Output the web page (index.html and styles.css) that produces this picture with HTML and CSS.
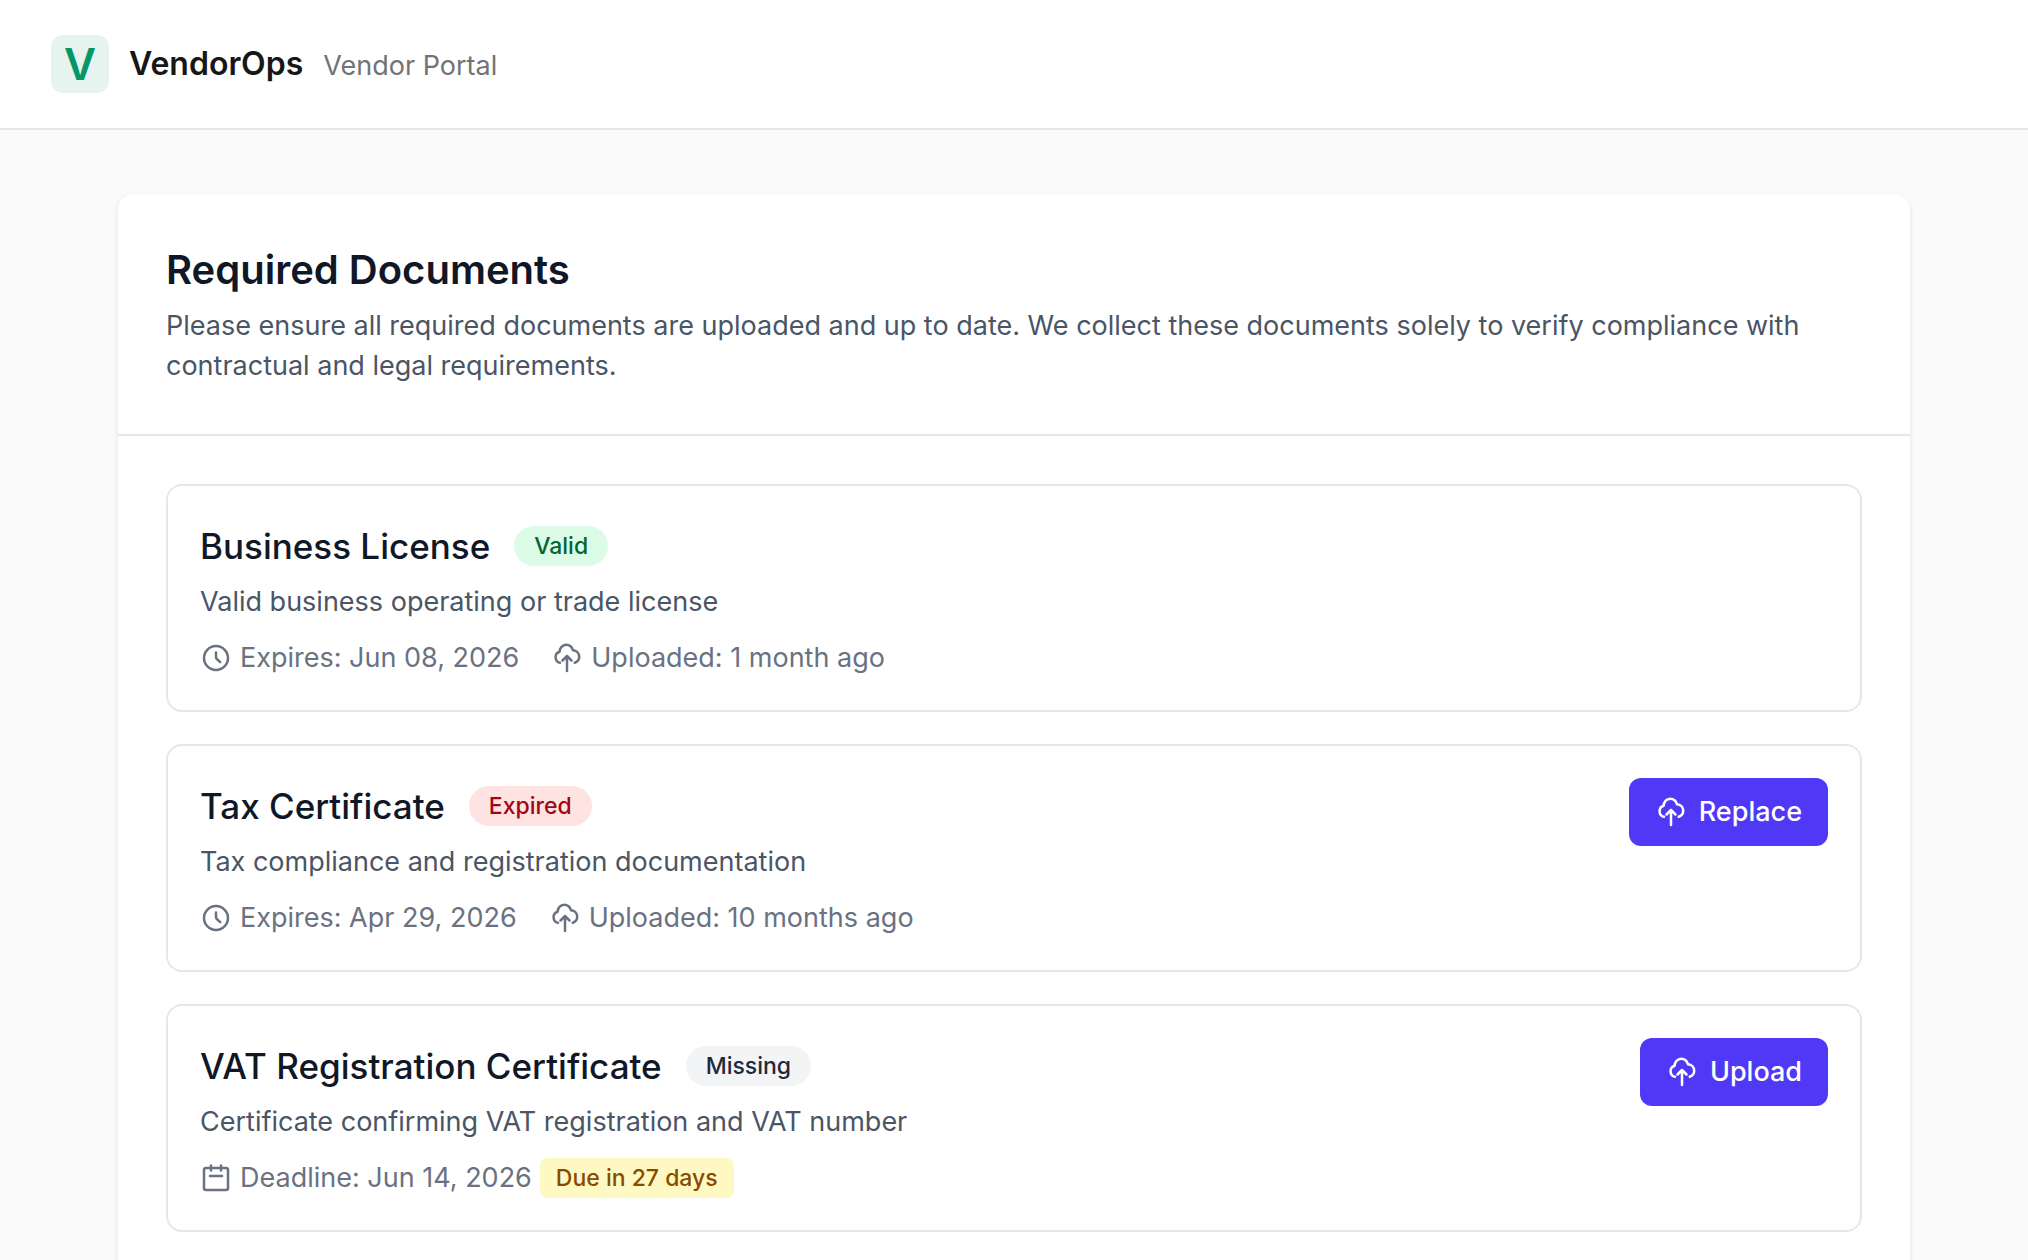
FILE: index.html
```html
<!DOCTYPE html>
<html lang="en">
<head>
    <meta charset="UTF-8">
    <meta name="viewport" content="width=device-width, initial-scale=1.0">
    <title>VendorOps - Vendor Portal</title>
    <link rel="stylesheet" href="styles.css">
</head>
<body>

    <!-- shared icons -->
    <svg class="sprite" aria-hidden="true">
        <symbol id="clock" viewBox="0 0 32 32">
            <circle cx="16" cy="16" r="12"/>
            <path d="M16 10.5v4.500q0 1.200.8 2l3.400 3.200"/>
        </symbol>
        <symbol id="cloud" viewBox="0 0 32 32">
            <path d="M9 20.8A5.7 5.700 0 0 1 8.600 9.800C8.700 6 11.400 2.700 15.200 2.700c3.300 0 5.900 2.200 6.800 5.600C25.800 8.700 28.200 11.400 28.200 14.800c0 2.900-1.800 5.100-4.400 6"/>
            <path d="M16 29V14.500M11.500 18.500L16 14l4.500 4.500"/>
        </symbol>
        <symbol id="calendar" viewBox="0 0 32 32">
            <rect x="4" y="6" width="24" height="22" rx="2"/>
            <path d="M11 3.500v5M21 3.500v5M10 14h12"/>
        </symbol>
    </svg>

    <header class="topbar">
        <div class="logo">V</div>
        <div class="titles">
            <span class="brand">VendorOps</span>
            <span class="portal">Vendor Portal</span>
        </div>
    </header>

    <main class="card">
        <div class="card-header">
            <h1>Required Documents</h1>
            <p>Please ensure all required documents are uploaded and up to date. We collect these documents solely to verify compliance with contractual and legal requirements.</p>
        </div>

        <div class="documents">
            <section class="document">
                <div class="info">
                    <div class="name">
                        <h2>Business License</h2>
                        <span class="badge valid">Valid</span>
                    </div>
                    <p>Valid business operating or trade license</p>
                    <div class="meta">
                        <span class="meta-item"><svg class="icon"><use href="#clock"/></svg>Expires: Jun 08, 2026</span>
                        <span class="meta-item"><svg class="icon"><use href="#cloud"/></svg>Uploaded: 1 month ago</span>
                    </div>
                </div>
            </section>

            <section class="document">
                <div class="info">
                    <div class="name">
                        <h2>Tax Certificate</h2>
                        <span class="badge expired">Expired</span>
                    </div>
                    <p>Tax compliance and registration documentation</p>
                    <div class="meta">
                        <span class="meta-item"><svg class="icon"><use href="#clock"/></svg>Expires: Apr 29, 2026</span>
                        <span class="meta-item"><svg class="icon"><use href="#cloud"/></svg>Uploaded: 10 months ago</span>
                    </div>
                </div>
                <button type="button"><svg class="icon"><use href="#cloud"/></svg>Replace</button>
            </section>

            <section class="document">
                <div class="info">
                    <div class="name">
                        <h2>VAT Registration Certificate</h2>
                        <span class="badge missing">Missing</span>
                    </div>
                    <p>Certificate confirming VAT registration and VAT number</p>
                    <div class="meta">
                        <span class="meta-item"><svg class="icon"><use href="#calendar"/></svg>Deadline: Jun 14, 2026 <span class="due">Due in 27 days</span></span>
                    </div>
                </div>
                <button type="button"><svg class="icon"><use href="#cloud"/></svg>Upload</button>
            </section>
        </div>
    </main>

</body>
</html>
```
FILE: styles.css
```css
* {
    box-sizing: border-box;
}

body {
    margin: 0;
    font-family: Inter, "Liberation Sans", sans-serif;
    font-size: 27px;
    line-height: 40px;
    background: #fafafa;
    color: #101828;
}

h1, h2, p {
    margin: 0;
}

.sprite {
    display: none;
}

.icon {
    width: 32px;
    height: 32px;
    flex-shrink: 0;
    fill: none;
    stroke: currentColor;
    stroke-width: 2.5;
    stroke-linecap: round;
    stroke-linejoin: round;
}

.topbar {
    display: flex;
    align-items: center;
    gap: 20px;
    padding: 35px 51px;
    background: #fff;
    border-bottom: 2px solid #e5e5e5;
}

.logo {
    width: 58px;
    height: 58px;
    border-radius: 12px;
    background: #e6f3ee;
    color: #059669;
    font-size: 44px;
    font-weight: 600;
    line-height: 58px;
    text-align: center;
}

.titles {
    display: flex;
    align-items: baseline;
    gap: 20px;
    padding-top: 2px;
}

.brand {
    font-size: 32px;
    font-weight: 600;
    color: #171717;
}

.portal {
    color: #737373;
}

.card {
    max-width: 1792px;
    margin: 64px auto;
    background: #fff;
    border-radius: 16px;
    box-shadow: 0 2px 6px rgba(0, 0, 0, 0.08), 0 2px 4px -2px rgba(0, 0, 0, 0.08);
}

.card-header {
    padding: 48px;
    border-bottom: 2px solid #e5e7eb;
    color: #4a5565;
}

h1 {
    margin-bottom: 8px;
    font-size: 40px;
    font-weight: 600;
    line-height: 56px;
    color: #101828;
}

.documents {
    display: flex;
    flex-direction: column;
    gap: 32px;
    padding: 48px;
}

.document {
    display: flex;
    justify-content: space-between;
    align-items: flex-start;
    padding: 32px;
    border: 2px solid #e5e7eb;
    border-radius: 16px;
}

.name {
    display: flex;
    align-items: center;
    gap: 24px;
    margin-bottom: 8px;
}

h2 {
    font-size: 35px;
    font-weight: 500;
    line-height: 56px;
}

.info p {
    color: #4a5565;
}

.badge {
    padding: 4px 20px;
    border-radius: 20px;
    font-size: 23px;
    font-weight: 500;
    line-height: 32px;
}

.valid {
    background: #dcfce7;
    color: #016630;
}

.expired {
    background: #ffe2e2;
    color: #9f0712;
}

.missing {
    background: #f3f4f6;
    color: #1e2939;
}

.meta {
    display: flex;
    gap: 32px;
    margin-top: 16px;
    color: #6a7282;
}

.meta-item {
    display: flex;
    align-items: center;
    gap: 8px;
}

.due {
    padding: 4px 16px;
    border-radius: 8px;
    background: #fef9c2;
    color: #894b00;
    font-size: 23px;
    font-weight: 500;
    line-height: 32px;
}

button {
    display: flex;
    align-items: center;
    gap: 12px;
    padding: 14px 26px;
    border: none;
    border-radius: 12px;
    background: #4f39f6;
    color: #fff;
    font-family: inherit;
    font-size: 27px;
    font-weight: 500;
    line-height: 40px;
    cursor: pointer;
}

button:hover {
    background: #432dd7;
}
```
